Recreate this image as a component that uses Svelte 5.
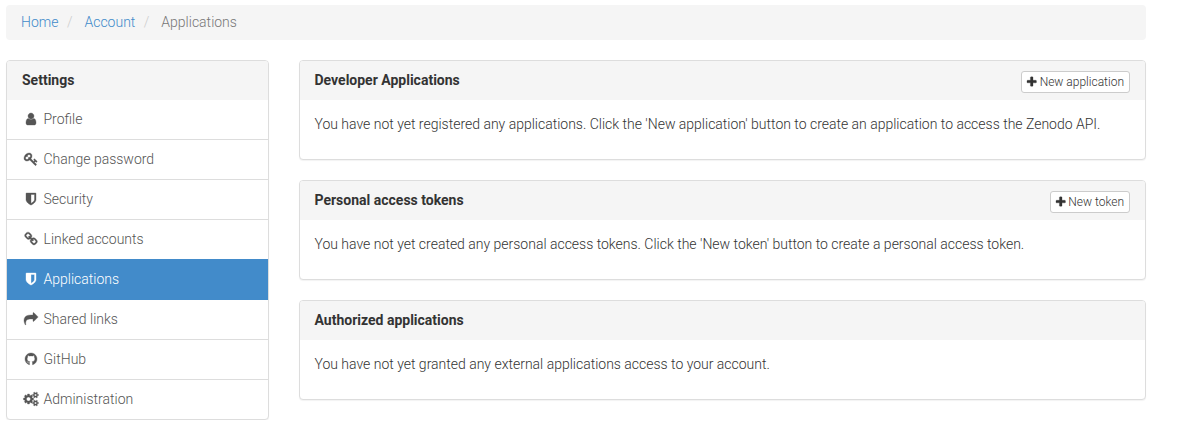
<script>
  const icons = {
    user: "M1536 1399q0 109-62.5 187t-150.5 78h-854q-88 0-150.5-78t-62.5-187q0-85 8.5-160.5t31.5-152 58.5-131 94-89 134.5-34.5q131 128 313 128t313-128q76 0 134.5 34.5t94 89 58.5 131 31.5 152 8.5 160.5zm-256-887q0 159-112.5 271.5t-271.5 112.5-271.5-112.5-112.5-271.5 112.5-271.5 271.5-112.5 271.5 112.5 112.5 271.5z",
    key: "M832 512q0-80-56-136t-136-56-136 56-56 136q0 42 19 83-41-19-83-19-80 0-136 56t-56 136 56 136 136 56 136-56 56-136q0-42-19-83 41 19 83 19 80 0 136-56t56-136zm851 704q0 17-49 66t-66 49q-9 0-28.5-16t-36.5-33-38.5-40-24.5-26l-96 96 220 220q28 28 28 68 0 42-39 81t-81 39q-40 0-68-28l-671-671q-176 131-365 131-163 0-265.5-102.5t-102.5-265.5q0-160 95-313t248-248 313-95q163 0 265.5 102.5t102.5 265.5q0 189-131 365l355 355 96-96q-3-3-26-24.5t-40-38.5-33-36.5-16-28.5q0-17 49-66t66-49q13 0 23 10 6 6 46 44.5t82 79.5 86.5 86 73 78 28.5 41z",
    shield: "M1344 960v-640h-448v1137q119-63 213-137 235-184 235-360zm192-768v768q0 86-33.5 170.5t-83 150-118 127.5-126.5 103-121 77.5-89.5 49.5-42.5 20q-12 6-26 6t-26-6q-16-7-42.5-20t-89.5-49.5-121-77.5-126.5-103-118-127.5-83-150-33.5-170.5v-768q0-26 19-45t45-19h1152q26 0 45 19t19 45z",
    link: "M1520 1216q0-40-28-68l-208-208q-28-28-68-28-42 0-72 32 3 3 19 18.5t21.5 21.5 15 19 13 25.5 3.5 27.5q0 40-28 68t-68 28q-15 0-27.5-3.5t-25.5-13-19-15-21.5-21.5-18.5-19q-33 31-33 73 0 40 28 68l206 207q27 27 68 27 40 0 68-26l147-146q28-28 28-67zm-703-705q0-40-28-68l-206-207q-28-28-68-28-39 0-68 27l-147 146q-28 28-28 67 0 40 28 68l208 208q27 27 68 27 42 0 72-31-3-3-19-18.5t-21.5-21.5-15-19-13-25.5-3.5-27.5q0-40 28-68t68-28q15 0 27.5 3.5t25.5 13 19 15 21.5 21.5 18.5 19q33-31 33-73zm895 705q0 120-85 203l-147 146q-83 83-203 83-121 0-204-85l-206-207q-83-83-83-203 0-123 88-209l-88-88q-86 88-208 88-120 0-204-84l-208-208q-84-84-84-204t85-203l147-146q83-83 203-83 121 0 204 85l206 207q83 83 83 203 0 123-88 209l88 88q86-88 208-88 120 0 204 84l208 208q84 84 84 204z",
    share: "M1792 640q0 26-19 45l-512 512q-19 19-45 19t-45-19-19-45v-256h-224q-98 0-175.5 6t-154 21.5-133 42.5-105.5 69.5-80 101-48.5 138.5-17.5 181q0 55 5 123 0 6 2.5 23.5t2.5 26.5q0 15-8.5 25t-23.5 10q-16 0-28-17-7-9-13-22t-13.5-30-10.5-24q-127-285-127-451 0-199 53-333 162-403 875-403h224v-256q0-26 19-45t45-19 45 19l512 512q19 19 19 45z",
    github: "M896 128q209 0 385.5 103t279.5 279.5 103 385.5q0 251-146.5 451.5t-378.5 277.5q-27 5-40-7t-13-30q0-3 .5-76.5t.5-134.5q0-97-52-142 57-6 102.5-18t94-39 81-66.5 53-105 20.5-150.5q0-119-79-206 37-91-8-204-28-9-81 11t-92 44l-38 24q-93-26-192-26t-192 26q-16-11-42.5-27t-83.5-38.5-85-13.5q-45 113-8 204-79 87-79 206 0 85 20.5 150t52.5 105 80.5 67 94 39 102.5 18q-39 36-49 103-21 10-45 15t-57 5-65.5-21.5-55.5-62.5q-19-32-48.5-52t-49.5-24l-20-3q-21 0-29 4.5t-5 11.5 9 14 13 12l7 5q22 10 43.5 38t31.5 51l10 23q13 38 44 61.5t67 30 69.5 7 55.5-3.5l23-4q0 38 .5 88.5t.5 54.5q0 18-13 30t-40 7q-232-77-378.5-277.5t-146.5-451.5q0-209 103-385.5t279.5-279.5 385.5-103z",
    cogs: "M832 896q0-106-75-181t-181-75-181 75-75 181 75 181 181 75 181-75 75-181zm768 512q0-52-38-90t-90-38-90 38-38 90q0 53 37.5 90.5t90.5 37.5 90.5-37.5 37.5-90.5zm0-1024q0-52-38-90t-90-38-90 38-38 90q0 53 37.5 90.5t90.5 37.5 90.5-37.5 37.5-90.5zm-384 421v185q0 10-7 19.5t-16 10.5l-155 24q-11 35-32 76 34 48 90 115 7 11 7 20 0 12-7 19-23 30-82.5 89.5t-78.5 59.5q-11 0-21-7l-115-90q-37 19-77 31-11 108-23 155-7 24-30 24h-186q-11 0-20-7.5t-10-17.5l-23-153q-34-10-75-31l-118 89q-7 7-20 7-11 0-21-8-144-133-144-160 0-9 7-19 10-14 41-53t47-61q-23-44-35-82l-152-24q-10-1-17-9.5t-7-19.5v-185q0-10 7-19.5t16-10.5l155-24q11-35 32-76-34-48-90-115-7-11-7-20 0-12 7-20 22-30 82-89t79-59q11 0 21 7l115 90q34-18 77-32 11-108 23-154 7-24 30-24h186q11 0 20 7.5t10 17.5l23 153q34 10 75 31l118-89q8-7 20-7 11 0 21 8 144 133 144 160 0 8-7 19-12 16-42 54t-45 60q23 48 34 82l152 23q10 2 17 10.5t7 19.5zm640 533v140q0 16-149 31-12 27-30 52 51 113 51 138 0 4-4 7-122 71-124 71-8 0-46-47t-52-68q-20 2-30 2t-30-2q-14 21-52 68t-46 47q-2 0-124-71-4-3-4-7 0-25 51-138-18-25-30-52-149-15-149-31v-140q0-16 149-31 13-29 30-52-51-113-51-138 0-4 4-7 4-2 35-20t59-34 30-16q8 0 46 46.5t52 67.5q20-2 30-2t30 2q51-71 92-112l6-2q4 0 124 70 4 3 4 7 0 25-51 138 17 23 30 52 149 15 149 31zm0-1024v140q0 16-149 31-12 27-30 52 51 113 51 138 0 4-4 7-122 71-124 71-8 0-46-47t-52-68q-20 2-30 2t-30-2q-14 21-52 68t-46 47q-2 0-124-71-4-3-4-7 0-25 51-138-18-25-30-52-149-15-149-31v-140q0-16 149-31 13-29 30-52-51-113-51-138 0-4 4-7 4-2 35-20t59-34 30-16q8 0 46 46.5t52 67.5q20-2 30-2t30 2q51-71 92-112l6-2q4 0 124 70 4 3 4 7 0 25-51 138 17 23 30 52 149 15 149 31z",
    plus: "M1600 736v192q0 40-28 68t-68 28h-416v416q0 40-28 68t-68 28h-192q-40 0-68-28t-28-68v-416h-416q-40 0-68-28t-28-68v-192q0-40 28-68t68-28h416v-416q0-40 28-68t68-28h192q40 0 68 28t28 68v416h416q40 0 68 28t28 68z"
  };

  const menu = [
    { label: "Profile", icon: "user" },
    { label: "Change password", icon: "key" },
    { label: "Security", icon: "shield" },
    { label: "Linked accounts", icon: "link" },
    { label: "Applications", icon: "shield", active: true },
    { label: "Shared links", icon: "share" },
    { label: "GitHub", icon: "github" },
    { label: "Administration", icon: "cogs" }
  ];

  const panels = [
    {
      title: "Developer Applications",
      action: "New application",
      text: "You have not yet registered any applications. Click the 'New application' button to create an application to access the Zenodo API."
    },
    {
      title: "Personal access tokens",
      action: "New token",
      text: "You have not yet created any personal access tokens. Click the 'New token' button to create a personal access token."
    },
    {
      title: "Authorized applications",
      text: "You have not yet granted any external applications access to your account."
    }
  ];
</script>

<div class="container">
  <ol class="breadcrumb">
    <li><a href="#home">Home</a></li>
    <li><a href="#account">Account</a></li>
    <li class="current">Applications</li>
  </ol>

  <div class="columns">
    <nav class="panel sidebar">
      <div class="heading">Settings</div>
      {#each menu as item}
        <a class="item" class:active={item.active} href="#settings">
          <span class="icon">
            <svg viewBox={item.icon === "cogs" ? "0 0 1920 1792" : "0 0 1792 1792"} width={item.icon === "cogs" ? 15 : 14} height="14">
              <path d={icons[item.icon]} />
            </svg>
          </span>
          <span>{item.label}</span>
        </a>
      {/each}
    </nav>

    <main>
      {#each panels as panel}
        <section class="panel">
          <div class="heading">
            <span>{panel.title}</span>
            {#if panel.action}
              <button>
                <svg viewBox="192 0 1408 1792" width="9.43" height="12"><path d={icons.plus} /></svg>
                <span>{panel.action}</span>
              </button>
            {/if}
          </div>
          <p>{panel.text}</p>
        </section>
      {/each}
    </main>
  </div>
</div>

<style>
  :global(body) {
    margin: 0;
    background: #fff;
  }
  .container {
    box-sizing: border-box;
    width: 1146px;
    padding: 5px 0 0 6px;
    font: 300 14px/20px Roboto, sans-serif;
    color: #333;
  }
  a {
    color: #428bca;
    text-decoration: none;
  }
  svg {
    display: block;
    overflow: visible;
    fill: currentColor;
    stroke: currentColor;
    stroke-width: 45;
  }
  .breadcrumb {
    box-sizing: border-box;
    display: flex;
    height: 35px;
    margin: 0 0 20px;
    padding: 7px 15px;
    list-style: none;
    background: #f5f5f5;
    border-radius: 4px;
  }
  .breadcrumb li + li::before {
    content: "/\00a0";
    padding: 0 8.5px 0 8.5px;
    color: #ccc;
  }
  .breadcrumb .current {
    color: #777;
  }
  .columns {
    display: grid;
    grid-template-columns: 262.5px 847.5px;
    gap: 30px;
    align-items: start;
  }
  main {
    display: grid;
    gap: 20px;
  }
  .panel {
    box-sizing: border-box;
    overflow: hidden;
    background: #fff;
    border: 1px solid #ddd;
    border-radius: 4px;
    box-shadow: 0 1px 1px rgba(0, 0, 0, 0.05);
  }
  .heading {
    box-sizing: border-box;
    display: flex;
    justify-content: space-between;
    align-items: flex-start;
    height: 39px;
    padding: 9px 15px;
    font-weight: 700;
    background: #f5f5f5;
  }
  .item {
    box-sizing: border-box;
    display: flex;
    height: 40px;
    padding: 9px 15px;
    color: #555;
    border-bottom: 1px solid #ddd;
  }
  .item:last-child {
    height: 39px;
    border-bottom: 0;
  }
  .item.active {
    height: 41px;
    margin-top: -1px;
    padding-top: 10px;
    color: #fff;
    background: #428bca;
    border-color: #428bca;
  }
  .icon {
    display: flex;
    justify-content: center;
    width: 18px;
    margin-right: 3.5px;
    padding-top: 3px;
  }
  p {
    box-sizing: border-box;
    height: 59px;
    margin: 0;
    padding: 14px 15px;
    letter-spacing: -0.006px;
  }
  button {
    display: flex;
    gap: 3px;
    box-sizing: border-box;
    height: 22px;
    margin-top: 1px;
    padding: 1px 5px;
    font: 300 12px/18px Roboto, sans-serif;
    color: #333;
    background: #fff;
    border: 1px solid #ccc;
    border-radius: 3px;
  }
  button svg {
    margin-top: 3px;
  }
</style>
